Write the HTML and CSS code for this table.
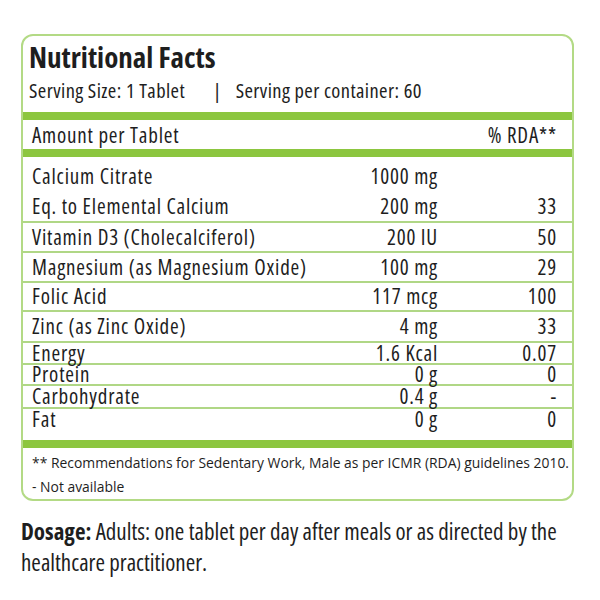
FILE: index.html
```html
<!DOCTYPE html>
<html>
<head>
<meta charset="utf-8">
<link rel="stylesheet" href="styles.css">
</head>
<body>
<div class="page">
  <div class="card">
    <div class="head">
      <h1 class="title">Nutritional Facts</h1>
      <div class="serving"><span>Serving Size: 1 Tablet</span><span class="sep">|</span><span>Serving per container: 60</span></div>
    </div>
    <div class="bar"></div>
    <div class="row hdr"><span>Amount per Tablet</span><span></span><span class="rda">% RDA**</span></div>
    <div class="bar"></div>
    <div class="group first">
      <div class="row h30"><span>Calcium Citrate</span><span class="amt">1000 mg</span><span class="rda"></span></div>
      <div class="row h30"><span>Eq. to Elemental Calcium</span><span class="amt">200 mg</span><span class="rda">33</span></div>
    </div>
    <div class="group"><div class="row h28"><span>Vitamin D3 (Cholecalciferol)</span><span class="amt">200 IU</span><span class="rda">50</span></div></div>
    <div class="group"><div class="row h28"><span>Magnesium (as Magnesium Oxide)</span><span class="amt">100 mg</span><span class="rda">29</span></div></div>
    <div class="group"><div class="row h27"><span>Folic Acid</span><span class="amt">117 mcg</span><span class="rda">100</span></div></div>
    <div class="group"><div class="row h29"><span>Zinc (as Zinc Oxide)</span><span class="amt">4 mg</span><span class="rda">33</span></div></div>
    <div class="group"><div class="row h20"><span>Energy</span><span class="amt">1.6 Kcal</span><span class="rda">0.07</span></div></div>
    <div class="group"><div class="row h19"><span>Protein</span><span class="amt">0 g</span><span class="rda">0</span></div></div>
    <div class="group"><div class="row h21"><span>Carbohydrate</span><span class="amt">0.4 g</span><span class="rda">-</span></div></div>
    <div class="group last"><div class="row h21"><span>Fat</span><span class="amt">0 g</span><span class="rda">0</span></div></div>
    <div class="bar"></div>
    <div class="foot">
      <div>** Recommendations for Sedentary Work, Male as per ICMR (RDA) guidelines 2010.</div>
      <div>- Not available</div>
    </div>
  </div>
  <p class="dosage"><b>Dosage:</b> Adults: one tablet per day after meals or as directed by the healthcare practitioner.</p>
</div>
</body>
</html>
```

FILE: styles.css
```css
html, body {
  margin: 0;
  padding: 0;
  background: #ffffff;
}
body {
  font-family: "Open Sans", "DejaVu Sans", sans-serif;
  font-stretch: 75%;
  color: #1e1e1e;
}
.page {
  padding: 34px 26px 0 21px;
  width: 553px;
}
.card {
  border: 2px solid #b3da85;
  border-radius: 12px;
  overflow: hidden;
}
.head {
  padding: 3px 8px 9px 6px;
}
.title {
  margin: 0;
  font-size: 29px;
  font-weight: 700;
  line-height: 36px;
  letter-spacing: 0;
}
.serving {
  margin-top: 2px;
  font-size: 20.5px;
  letter-spacing: 0.4px;
  line-height: 26px;
  display: flex;
}
.sep {
  margin: 0 14px 0 28px;
}
.bar {
  height: 8px;
  background: #8cc63f;
}
.row {
  display: grid;
  grid-template-columns: 1fr 100px 119px;
  padding: 0 15px 0 9px;
  font-size: 21px;
  letter-spacing: 0.8px;
}
.row .amt, .row .rda {
  text-align: right;
}
.hdr {
  line-height: 28px;
  padding-top: 1px;
}
.group {
  border-bottom: 2px solid #b0d786;
}
.group.first {
  padding-top: 4px;
}
.group.last {
  border-bottom: none;
  padding-bottom: 10px;
}
.h30 { line-height: 30px; }
.h29 { line-height: 29px; }
.h28 { line-height: 28px; }
.h27 { line-height: 27px; }
.h21 { line-height: 21px; }
.h20 { line-height: 20px; }
.h19 { line-height: 19px; }
.foot {
  padding: 3px 4px 0 9px;
  font-size: 13.9px;
  font-stretch: 100%;
  line-height: 24px;
  white-space: nowrap;
}
.dosage {
  margin: 15px 0 0 0;
  font-size: 23px;
  line-height: 31px;
}
.dosage b {
  font-weight: 700;
}
```
